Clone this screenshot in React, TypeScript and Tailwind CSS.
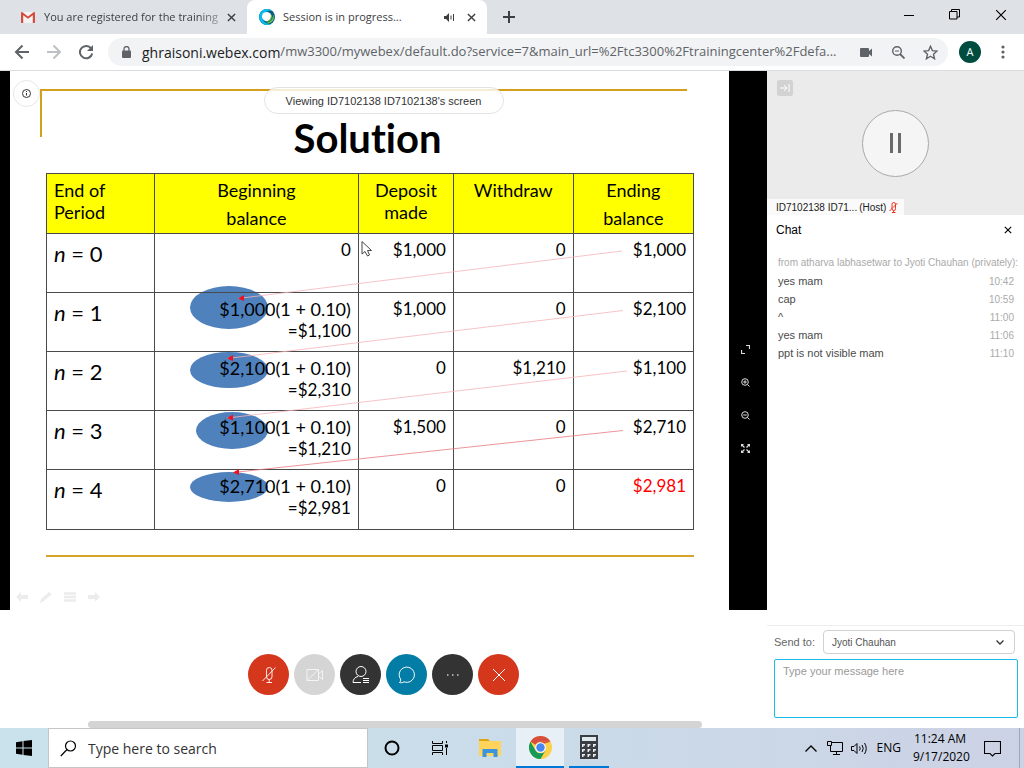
import React from "react";

type IconProps = { className?: string; children: React.ReactNode; box?: string };

function Icon({ className = "size-4", children, box = "0 0 24 24" }: IconProps) {
  return (
    <svg viewBox={box} className={className} fill="none" stroke="currentColor" aria-hidden="true">
      {children}
    </svg>
  );
}

function CloseGlyph({ className }: { className: string }) {
  return (
    <Icon className={className} box="0 0 10 10">
      <path d="M1 1 9 9M9 1 1 9" />
    </Icon>
  );
}

function BrowserTabs() {
  return (
    <div className="flex h-[34px] shrink-0 items-stretch bg-[#dee1e6] text-[11px] text-[#3c4043]">
      <div className="flex w-[247px] items-center pr-[7px] pl-[21px]">
        <svg viewBox="0 0 14 11" className="h-[11px] w-[14px] shrink-0" aria-hidden="true">
          <path d="M1 0h12v11H1z" fill="#f2f2f2" />
          <path d="M0 1.2C0 .4.7 0 1.2 0L7 4.4 12.800 0c.6 0 1.200.4 1.200 1.200V10c0 .6-.4 1-1 1h-1.200V3.200L7 6.800 2.200 3.200V11H1c-.6 0-1-.4-1-1z" fill="#d54b3d" />
        </svg>
        <span className="ml-[9px] flex-1 whitespace-nowrap [mask-image:linear-gradient(to_right,black_86%,transparent_106%)]">
          You are registered for the training
        </span>
        <button aria-label="Close tab" className="p-1 text-[#3c4043]">
          <CloseGlyph className="size-[9px] stroke-[1.6]" />
        </button>
      </div>
      <div className="flex w-[240px] items-center rounded-t-lg bg-white pr-[7px] pl-3">
        <svg viewBox="0 0 16 16" className="size-4 shrink-0" aria-hidden="true">
          <circle cx="8" cy="8" r="8" fill="#0a5c80" />
          <path d="M8 0a8 8 0 1 0 4 15C8 15 4 13 3.600 9 3.200 4 8 1 13 1.800A8 8 0 0 0 8 0z" fill="#07bdee" />
          <path d="M14 4.500c.8 4.500-2 8.500-7 9.500 4 1.500 8-1.500 8-6z" fill="#64c24a" />
          <circle cx="7.600" cy="7.600" r="4.600" fill="#fff" />
          <path d="M12.200 5c2 4-1 8-5.700 8.300 3.500-1 5.500-4 5.700-8.300z" fill="#6cc54b" />
        </svg>
        <span className="ml-2 flex-1 whitespace-nowrap">Session is in progress...</span>
        <Icon className="mr-2 size-[11px]" box="0 0 11 11">
          <path d="M0 4h2l3-3v9L2 7H0z" fill="currentColor" stroke="none" />
          <path d="M7 3.500v4M9.500 2v7" />
        </Icon>
        <button aria-label="Close tab" className="p-1">
          <CloseGlyph className="size-[9px] stroke-[1.6]" />
        </button>
      </div>
      <button aria-label="New tab" className="px-4 text-[#3c4043]">
        <Icon className="size-3" box="0 0 12 12">
          <path d="M6 0v12M0 6h12" strokeWidth="2" />
        </Icon>
      </button>
      <div className="ml-auto flex items-start gap-[15px] pr-2 text-black">
        <button aria-label="Minimize" className="flex size-[31px] items-center justify-center">
          <Icon className="size-[10px]" box="0 0 10 10"><path d="M0 4.500h10" /></Icon>
        </button>
        <button aria-label="Restore" className="flex h-[29px] w-[31px] items-center justify-center">
          <Icon className="size-[11px]" box="0 0 11 11"><path d="M.5 2.500h7.500v7.500H.5zM2.500 2.500V.5h8v7.500H8" /></Icon>
        </button>
        <button aria-label="Close window" className="flex h-[29px] w-[31px] items-center justify-center">
          <CloseGlyph className="size-3 stroke-1" />
        </button>
      </div>
    </div>
  );
}

function AddressBar() {
  return (
    <div className="flex h-[37px] shrink-0 items-center border-b border-[#dadce0] bg-white px-[14px] text-[#5f6368]">
      <button aria-label="Back">
        <Icon className="size-4" box="0 0 16 16"><path d="M15 8H2M8.500 1.500 2 8l6.500 6.500" strokeWidth="2" /></Icon>
      </button>
      <button aria-label="Forward" className="ml-4 text-[#bdc0c4]">
        <Icon className="size-4" box="0 0 16 16"><path d="M1 8h13M7.500 1.500 14 8l-6.500 6.500" strokeWidth="2" /></Icon>
      </button>
      <button aria-label="Reload" className="ml-4">
        <Icon className="size-4" box="0 0 16 16">
          <path d="M13.200 4.500A6.200 6.200 0 1 0 14.200 9.500" strokeWidth="2" />
          <path d="M15 1v6H9z" fill="currentColor" stroke="none" />
        </Icon>
      </button>
      <div className="ml-[14px] flex h-7 min-w-0 flex-1 items-center rounded-full bg-[#f1f3f4] pr-[10px] pl-[14px] text-[14px]">
        <svg viewBox="0 0 9 12" className="h-3 w-[9px] shrink-0" aria-hidden="true">
          <rect y="4.500" width="9" height="7.500" rx="1" fill="#5f6368" />
          <path d="M2 5V3a2.500 2.500 0 0 1 5 0v2" fill="none" stroke="#5f6368" strokeWidth="1.300" />
        </svg>
        <label htmlFor="url" className="ml-[11px] text-[#202124]">ghraisoni.webex.com</label>
        <input
          id="url"
          className="min-w-0 flex-1 bg-transparent text-[13px] text-ellipsis outline-none"
          defaultValue="/mw3300/mywebex/default.do?service=7&main_url=%2Ftc3300%2Ftrainingcenter%2Fdefa..."
        />
        <svg viewBox="0 0 12 9" className="ml-3 h-[9px] w-3 shrink-0" fill="#5f6368" aria-hidden="true">
          <path d="M0 1a1 1 0 0 1 1-1h7a1 1 0 0 1 1 1v2l3-2.500v8L9 6v2a1 1 0 0 1-1 1H1a1 1 0 0 1-1-1z" />
        </svg>
        <button aria-label="Zoom" className="ml-5">
          <Icon className="size-[13px]" box="0 0 13 13">
            <circle cx="5" cy="5" r="4.300" strokeWidth="1.400" />
            <path d="M8 8l4.500 4.500" strokeWidth="1.800" /><path d="M3 5h4" />
          </Icon>
        </button>
        <button aria-label="Bookmark" className="ml-[18px]">
          <Icon className="size-[15px]" box="0 0 24 24">
            <path d="m12 2 3 7 7.500.6-5.700 5 1.700 7.400L12 18l-6.500 4 1.700-7.400-5.700-5L9 9z" strokeWidth="2.200" />
          </Icon>
        </button>
      </div>
      <button className="ml-[11px] flex size-[22px] items-center justify-center rounded-full bg-[#004d40] text-[11px] text-white">A</button>
      <button aria-label="Menu" className="ml-[15px]">
        <svg viewBox="0 0 14 14" className="size-[14px]" fill="#5f6368" aria-hidden="true">
          <circle cx="7" cy="2" r="1.600" /><circle cx="7" cy="7" r="1.600" /><circle cx="7" cy="12" r="1.600" />
        </svg>
      </button>
    </div>
  );
}

const rows = [
  { n: "0", begin: ["0"], deposit: "$1,000", withdraw: "0", end: "$1,000" },
  { n: "1", begin: ["$1,000(1 + 0.10)", "=$1,100"], deposit: "$1,000", withdraw: "0", end: "$2,100" },
  { n: "2", begin: ["$2,100(1 + 0.10)", "=$2,310"], deposit: "0", withdraw: "$1,210", end: "$1,100" },
  { n: "3", begin: ["$1,100(1 + 0.10)", "=$1,210"], deposit: "$1,500", withdraw: "0", end: "$2,710" },
  { n: "4", begin: ["$2,710(1 + 0.10)", "=$2,981"], deposit: "0", withdraw: "0", end: "$2,981" },
];

const ellipses = [
  { cx: 183, cy: 134.5, rx: 39, ry: 21.5 },
  { cx: 183, cy: 197, rx: 39, ry: 18 },
  { cx: 186, cy: 257.5, rx: 36, ry: 18.5 },
  { cx: 183, cy: 314, rx: 39, ry: 15 },
];

const arrows = [
  { x1: 576, y1: 78, x2: 192, y2: 125.500, color: "#f6b4b8" },
  { x1: 577, y1: 137.500, x2: 181, y2: 185.500, color: "#f6b4b8" },
  { x1: 581, y1: 198, x2: 181, y2: 245, color: "#f6b4b8" },
  { x1: 577, y1: 257.500, x2: 187, y2: 299.500, color: "#e87a7e" },
];

function BalanceTable() {
  const cell = "border border-[#4a4a4a] px-[7px] pt-[5px] align-top";
  return (
    <div className="relative">
      <svg viewBox="0 0 648 357" preserveAspectRatio="none" className="absolute inset-0 size-full" aria-hidden="true">
        {ellipses.map((e) => <ellipse key={e.cy} {...e} fill="#4f81bd" />)}
      </svg>
      <table className="relative w-full table-fixed border-collapse text-[17px] leading-[22px] text-black">
        <colgroup>
          <col className="w-[16.7%]" /><col className="w-[31.5%]" /><col className="w-[14.7%]" />
          <col className="w-[18.5%]" /><col className="w-[18.6%]" />
        </colgroup>
        <thead className="text-[18px] leading-[22px]">
          <tr className="h-[60px] bg-[#ffff00]">
            <th className={`${cell} text-left font-normal`}>End of<br />Period</th>
            <th className={`${cell} leading-7 font-normal`}><span className="-mt-[3px] block">Beginning<br />balance</span></th>
            <th className={`${cell} font-normal`}>Deposit<br />made</th>
            <th className={`${cell} font-normal`}>Withdraw</th>
            <th className={`${cell} leading-7 font-normal`}><span className="-mt-[3px] block">Ending<br />balance</span></th>
          </tr>
        </thead>
        <tbody>
          {rows.map((r) => (
            <tr key={r.n} className="h-[59px] last:h-[60px]">
              <td className={`${cell} text-[22px] leading-[30px]`}><i>n</i> = {r.n}</td>
              <td className={`${cell} text-right`}>
                {r.begin.map((b) => (
                  <div key={b} className={b.includes("(") ? "text-[18px] leading-[22px]" : ""}>{b}</div>
                ))}
              </td>
              <td className={`${cell} text-right`}>{r.deposit}</td>
              <td className={`${cell} text-right`}>{r.withdraw}</td>
              <td className={`${cell} text-right ${r.n === "4" ? "text-[#ff0000]" : ""}`}>{r.end}</td>
            </tr>
          ))}
        </tbody>
      </table>
      <svg viewBox="0 0 648 357" preserveAspectRatio="none" className="pointer-events-none absolute inset-0 size-full" aria-hidden="true">
        {arrows.map((a) => (
          <g key={a.y1}>
            <line x1={a.x1} y1={a.y1} x2={a.x2} y2={a.y2} stroke={a.color} strokeWidth="0.800" />
            <path d={`M${a.x2} ${a.y2}l6-3.500v6z`} fill="#ee1122" />
          </g>
        ))}
        <path d="M316 68.500v12.500l3-2.500 2.500 4.500 2-1-2-4.500h4z" fill="#fff" stroke="#333" strokeWidth="0.900" />
      </svg>
    </div>
  );
}

function Slide() {
  return (
    <div className="relative flex min-w-0 flex-1 flex-col overflow-hidden bg-white pt-[18px] font-[Lato,sans-serif] [font-variant-ligatures:none]">
      <div className="mr-[42px] ml-[30px] h-12 border-t-2 border-l-2 border-[#d4a01c]">
        <h1 className="pt-[21px] pl-[6px] text-center text-[40px] leading-[52px] font-bold text-black">Solution</h1>
      </div>
      <div className="mt-9 mr-[35px] ml-[36px]">
        <BalanceTable />
        <hr className="mt-[25px] border-t-2 border-[#d4a52c]" />
      </div>
      <div className="mt-auto mb-[7px] ml-[6px] flex gap-3 text-[#ececec]">
        <Icon className="size-3" box="0 0 12 12"><path d="M0 6l5-5v3h7v4H5v3z" fill="currentColor" stroke="none" /></Icon>
        <Icon className="size-3" box="0 0 12 12"><path d="M0 12l1-4 8-7 3 2-8 7z" fill="currentColor" stroke="none" /></Icon>
        <Icon className="size-3" box="0 0 12 12"><path d="M0 2.500h12M0 6h12M0 9.500h12" strokeWidth="2.500" /></Icon>
        <Icon className="size-3" box="0 0 12 12"><path d="M12 6 7 1v3H0v4h7v3z" fill="currentColor" stroke="none" /></Icon>
      </div>
      <button aria-label="Session info" className="absolute top-[9px] left-[3px] flex size-[27px] items-center justify-center rounded-full border border-[#e6e6e6] bg-white text-[#333]">
        <Icon className="size-[9px]" box="0 0 9 9"><circle cx="4.500" cy="4.500" r="4" /><path d="M4.500 4v2.500M4.500 2v1" /></Icon>
      </button>
      <div className="absolute top-4 left-1/2 flex h-[27px] w-60 -translate-x-[106px] items-center justify-center rounded-full border border-[#e2e2e2] bg-white/80 pt-px font-['Liberation_Sans',Arial,sans-serif] text-[11px] whitespace-nowrap text-[#333]">
        Viewing ID7102138 ID7102138's screen
      </div>
    </div>
  );
}

function ViewTools() {
  const btn = "flex h-[33px] w-full items-center justify-center";
  return (
    <div className="flex w-[38px] shrink-0 flex-col bg-black pt-[262px] pr-[5px] text-[#ddd]">
      <button aria-label="Fit to window" className={btn}>
        <Icon className="size-[9px]" box="0 0 9 9"><path d="M5 .5h3.500V4M.5 5v3.500H4" strokeWidth="1.200" /></Icon>
      </button>
      <button aria-label="Zoom in" className={btn}>
        <Icon className="size-[9px]" box="0 0 9 9"><circle cx="4" cy="4" r="3.300" /><path d="M6.500 6.500l2 2M2.200 4h3.600M4 2.200v3.600" /></Icon>
      </button>
      <button aria-label="Zoom out" className={btn}>
        <Icon className="size-[9px]" box="0 0 9 9"><circle cx="4" cy="4" r="3.300" /><path d="M6.500 6.500l2 2M2.200 4h3.600" /></Icon>
      </button>
      <button aria-label="Full screen" className={btn}>
        <Icon className="size-[9px]" box="0 0 9 9">
          <path d="M0 0h3L0 3zM9 0v3L6 0zM9 9H6l3-3zM0 9V6l3 3z" fill="currentColor" stroke="none" />
          <path d="M1 1l2.500 2.500M8 1 5.500 3.500M8 8 5.500 5.500M1 8l2.500-2.500" strokeWidth="1.300" />
        </Icon>
      </button>
    </div>
  );
}

function Controls() {
  const base = "flex size-[41px] items-center justify-center rounded-full";
  return (
    <div className="flex h-[118px] shrink-0 flex-col bg-white">
      <div className="flex flex-1 items-center justify-center gap-[5px] pt-[22px] pb-1">
        <button aria-label="Unmute" className={`${base} bg-[#d4371c] text-white`}>
          <Icon className="size-[18px]" box="0 0 18 18"><rect x="6.500" y="1.500" width="5.500" height="12" rx="2.700" strokeWidth="0.900" /><path d="M9.200 13.500v3M6.500 16.500h5.500M15.500 1.500 2.500 15" strokeWidth="0.900" /></Icon>
        </button>
        <button aria-label="Start video" className={`${base} bg-[#d5d5d5] text-[#f4f4f4]`}>
          <Icon className="size-[18px]" box="0 0 18 18"><path d="M1 3.500h11.500v11H1zM1 14.500l11.500-11M12.500 8l4-3.500v9l-4-3.500" /></Icon>
        </button>
        <button aria-label="Participants" className={`${base} bg-[#333] text-white`}>
          <Icon className="size-[18px]" box="0 0 18 18"><circle cx="9" cy="5.500" r="5" /><path d="M6 10.500C3 11 1 13.500 1 16.500h8M11 12.500h6M11 14.500h6M11 16.500h6" /></Icon>
        </button>
        <button aria-label="Chat" className={`${base} bg-[#037ca6] text-white`}>
          <Icon className="size-[18px]" box="0 0 18 18"><path d="M2.500 13A7.600 7.600 0 1 1 6 15.800C4.500 16.800 3 17 1.500 16.500 2.500 15.500 3 14.500 2.500 13z" /></Icon>
        </button>
        <button aria-label="More options" className={`${base} bg-[#333] text-[#ccc]`}>
          <Icon className="size-[14px]" box="0 0 14 14"><path d="M1 7h1.500M6 7h1.500M11 7h1.500" strokeWidth="1.500" /></Icon>
        </button>
        <button aria-label="Leave session" className={`${base} bg-[#d4371c] text-white`}>
          <Icon className="size-[14px]" box="0 0 14 14"><path d="M1 1l12 12M13 1 1 13" /></Icon>
        </button>
      </div>
      <div className="mr-[65px] ml-[88px] h-[7px] rounded-full bg-[#d4d4d4]" />
    </div>
  );
}

const messages = [
  ["yes mam", "10:42"], ["cap", "10:59"], ["^", "11:00"], ["yes mam", "11:06"], ["ppt is not visible mam", "11:10"],
];

function SidePanel() {
  return (
    <aside className="flex w-[257px] shrink-0 flex-col bg-white font-['Liberation_Sans',Arial,sans-serif] text-[11px] text-[#4a4a4a]">
      <div className="relative flex h-36 shrink-0 items-center justify-center bg-[#ebebeb]">
        <div className="flex size-[67px] items-center justify-center gap-[5px] rounded-full border border-[#aaa] bg-[#f5f5f5]">
          <span className="h-5 w-[3px] bg-[#6a6a6a]" /><span className="h-5 w-[3px] bg-[#6a6a6a]" />
        </div>
        <button aria-label="Collapse panel" className="absolute top-[9px] left-[10px] flex size-4 items-center justify-center rounded-xs bg-[#d2d2d2] text-white">
          <Icon className="size-[10px]" box="0 0 10 10"><path d="M0 5h7M4 2l3 3-3 3M9 1v8" /></Icon>
        </button>
        <div className="absolute bottom-0 left-0 flex h-4 w-[137px] items-center bg-[#fafafa] pl-[9px] text-[10px] whitespace-nowrap text-[#222]">
          ID7102138 ID71... <span className="ml-[2px]">(Host)</span>
          <Icon className="ml-[3px] h-[11px] w-[9px] text-[#ee3322]" box="0 0 9 11"><rect x="3" y=".5" width="3.500" height="8" rx="1.700" /><path d="M4.700 8.500v2M3 10.500h3.500M8.500 1 .5 9" /></Icon>
        </div>
      </div>
      <div className="flex h-[30px] items-center justify-between pr-[12px] pl-[9px]">
        <h2 className="text-[12px] text-black">Chat</h2>
        <button aria-label="Close chat" className="text-black"><CloseGlyph className="size-2 stroke-[1.4]" /></button>
      </div>
      <div className="flex-1 pt-[11px] pr-[10px] pl-[11px]">
        <p className="pb-[2px] text-[10px] leading-[14px] whitespace-nowrap text-[#aaa]">from atharva labhasetwar to Jyoti Chauhan (privately):</p>
        <ul>
          {messages.map(([text, time]) => (
            <li key={time} className="flex h-[18px] items-center justify-between">
              <span>{text}</span><time className="text-[10px] text-[#aaa]">{time}</time>
            </li>
          ))}
        </ul>
      </div>
      <form className="border-t border-[#ededed] pt-1 pr-[6px] pb-[10px] pl-[7px]">
        <div className="flex items-center pr-[3px]">
          <label htmlFor="recipient" className="text-[#666]">Send to:</label>
          <span className="relative ml-2 flex-1">
            <select id="recipient" className="h-6 w-full appearance-none rounded-sm border border-[#d0d0d0] bg-white px-2 text-[10px] text-[#555] outline-none">
              <option>Jyoti Chauhan</option>
            </select>
            <Icon className="pointer-events-none absolute top-[10px] right-[11px] h-[5px] w-2 text-[#333]" box="0 0 8 5"><path d="M.5.5 4 4 7.500.5" strokeWidth="1.300" /></Icon>
          </span>
        </div>
        <textarea
          aria-label="Message"
          placeholder="Type your message here"
          className="mt-[5px] block h-[59px] w-full resize-none rounded-xs border border-[#18bde8] px-2 py-1 text-[11px] leading-[14px] outline-none placeholder:text-[#999]"
        />
      </form>
    </aside>
  );
}

function Taskbar() {
  return (
    <footer className="flex h-10 shrink-0 items-stretch bg-linear-to-r from-[#c9e2ec] via-[#cadce9] to-[#ccd2e5] text-black">
      <button aria-label="Start" className="flex w-12 items-center justify-center">
        <svg viewBox="0 0 16 16" className="size-4" aria-hidden="true">
          <path d="M0 2.200 6.500 1.300v6.200H0zM7.500 1.100 16 0v7.500H7.500zM0 8.500h6.500v6.200L0 13.800zM7.500 8.500H16V16l-8.500-1.100z" />
        </svg>
      </button>
      <label className="flex w-80 items-center border border-[#c5c5c5] bg-white pl-[11px]">
        <Icon className="size-[17px]" box="0 0 17 17"><circle cx="10.500" cy="6" r="5" strokeWidth="1.200" /><path d="M7 9.500.8 16" strokeWidth="1.200" /></Icon>
        <input aria-label="Search" placeholder="Type here to search" className="ml-[11px] w-60 bg-transparent text-[14px] outline-none placeholder:text-[#333]" />
      </label>
      <button aria-label="Cortana" className="flex w-12 items-center justify-center">
        <Icon className="size-4" box="0 0 16 16"><circle cx="8" cy="8" r="6.500" strokeWidth="2" /></Icon>
      </button>
      <button aria-label="Task view" className="flex w-12 items-center justify-center">
        <Icon className="size-4" box="0 0 16 16"><path d="M.5 1v2.500h10V1M.5 5.500h10v5H.5zM.5 15v-2.500h10V15M14.500 1v2M14.500 8v7" /><path d="M13 4.500h3v3h-3z" fill="currentColor" stroke="none" /></Icon>
      </button>
      <button aria-label="File Explorer" className="flex w-[52px] items-center justify-center">
        <svg viewBox="0 0 22 18" className="h-[18px] w-[22px]" aria-hidden="true">
          <path d="M0 0h9l2 2H0z" fill="#dfa414" /><path d="M0 2h22v15H0z" fill="#ffd35c" />
          <path d="M3.500 10h15v8h-4v-4h-7v4h-4z" fill="#3b95dc" />
        </svg>
      </button>
      <button aria-label="Chrome" className="flex w-12 items-center justify-center border-b-2 border-[#0078d7] bg-[#e8f0f7]">
        <svg viewBox="0 0 24 24" className="size-[23px]" aria-hidden="true">
          <circle cx="12" cy="12" r="12" fill="#fdd04b" />
          <path d="M1.600 6A12 12 0 0 1 22.400 6H12a6 6 0 0 0-5.200 3z" fill="#d94f3f" />
          <path d="M1.600 6A12 12 0 0 0 12 24l5.200-9A6 6 0 0 1 6.800 15z" fill="#159b57" />
          <path d="M22.400 6H12v3z" fill="#d94f3f" />
          <circle cx="12" cy="12" r="5.600" fill="#fff" /><circle cx="12" cy="12" r="4.400" fill="#4787f1" />
        </svg>
      </button>
      <button aria-label="Calculator" className="ml-[5px] flex w-10 items-center justify-center border-b-2 border-[#0078d7]">
        <svg viewBox="0 0 18 24" className="h-6 w-[18px]" aria-hidden="true">
          <path d="M0 0h18v24H0z" fill="#3a3d42" /><path d="M2 2h14v4H2z" fill="#dfeaf0" />
          {[9, 14, 19].map((y) => [2, 7.500, 13].map((x) => <path key={`${x}-${y}`} d={`M${x} ${y}h3v1.500h-1.500v1.500H${x}z`} fill="#e8eef2" />))}
        </svg>
      </button>
      <div className="ml-auto flex items-center">
        <button aria-label="Hidden icons"><Icon className="h-[7px] w-3" box="0 0 12 7"><path d="M.5 6.500 6 1l5.500 5.500" strokeWidth="1.300" /></Icon></button>
        <Icon className="ml-[10px] h-[14px] w-4" box="0 0 16 14"><path d="M5 1.500h10.500v9H3.500V5M.5.500h4v4h-4zM9.500 10.500v3M6 13.500h7" /></Icon>
        <Icon className="ml-2 h-[13px] w-4" box="0 0 16 13"><path d="M.5 4.500H3l3-3v10l-3-3H.5zM8.500 4.500q1.500 2 0 4M11 3q2.500 3.500 0 7M13.500 1q3.500 5.500 0 11" /></Icon>
        <span className="ml-[10px] text-[12px]">ENG</span>
        <div className="ml-3 w-[54px] text-center text-[12px] leading-[18px] whitespace-nowrap">
          <div>11:24 AM</div><div>9/17/2020</div>
        </div>
        <button aria-label="Notifications" className="mr-[18px] ml-[17px]">
          <Icon className="size-[17px]" box="0 0 17 17"><path d="M.5 1.500h16v12H11L8.500 16 6 13.500H.5z" strokeWidth="1.100" /></Icon>
        </button>
        <span className="mr-1 h-10 border-l border-[#a0a8b4]" />
      </div>
    </footer>
  );
}

export default function App() {
  return (
    <div className="flex h-screen min-h-[640px] flex-col overflow-hidden bg-white font-['Open_Sans','Noto_Sans',sans-serif]">
      <BrowserTabs />
      <AddressBar />
      <main className="flex min-h-0 flex-1">
        <section className="flex min-w-0 flex-1 flex-col">
          <div className="flex min-h-0 flex-1 bg-black pl-[10px]">
            <Slide />
            <ViewTools />
          </div>
          <Controls />
        </section>
        <SidePanel />
      </main>
      <Taskbar />
    </div>
  );
}
